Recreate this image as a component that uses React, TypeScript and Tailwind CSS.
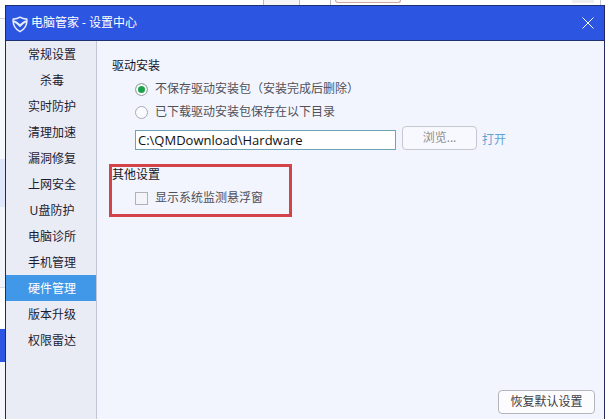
import { useState } from 'react'

const menu = [
  '常规设置',
  '杀毒',
  '实时防护',
  '清理加速',
  '漏洞修复',
  '上网安全',
  'U盘防护',
  '电脑诊所',
  '手机管理',
  '硬件管理',
  '版本升级',
  '权限雷达',
]

const saveModes = [
  { id: 'discard', label: '不保存驱动安装包（安装完成后删除）' },
  { id: 'keep', label: '已下载驱动安装包保存在以下目录' },
]

function TitleBar() {
  return (
    <header className="flex h-9 shrink-0 items-center justify-between border-y border-[#1f3270] bg-[#2c55e2] pl-1.5 pr-2 text-white">
      <div className="flex items-center gap-[3px]">
        <svg width="16" height="17" viewBox="0 0 16 17" fill="none" stroke="#e4ecff" className="mt-0.5">
          <path d="M8 1.2C6 2.5 3.6 3 1.2 3.1C.6 9 3.4 13.2 8 15.6C12.6 13.2 15.4 9 14.8 3.1C12.4 3 10 2.5 8 1.2Z" strokeWidth="1.6" strokeLinejoin="round" />
          <path d="M2 5.2C4 6 6 7.600 8 9.600C10 7.600 12 6 14 5.200" strokeWidth="2.200" />
        </svg>
        <h1>电脑管家 - 设置中心</h1>
      </div>
      <button type="button" aria-label="关闭" className="p-0.5">
        <svg width="12" height="12" viewBox="0 0 12 12" fill="none" stroke="#fff">
          <path d="M.5 .5L11.5 11.5M11.5 .5L.5 11.5" />
        </svg>
      </button>
    </header>
  )
}

function Sidebar({ active, onSelect }: { active: string; onSelect: (item: string) => void }) {
  return (
    <nav className="w-[91px] shrink-0 border-r border-[#c3c6d4] bg-[#e9ebf5]">
      {menu.map((item) => (
        <button
          key={item}
          type="button"
          onClick={() => onSelect(item)}
          className={`block h-[26px] w-full pl-0.5 pt-0.5 text-center ${item === active ? 'bg-[#4298e8] text-white' : 'text-[#1c1c30]'}`}
        >
          {item}
        </button>
      ))}
    </nav>
  )
}

// The page that shows around the edges of the dialog
function BackdropTop() {
  return (
    <div className="flex h-[5px] shrink-0 pl-[263px]">
      <div className="w-9 border-l border-[#b9b9c0] bg-[#f5f5f7]" />
      <div className="w-8 border-x border-[#b9b9c8]" />
      <div className="ml-1 h-[3px] w-[66px] rounded-b-sm border border-t-0 border-[#c9aaa4] bg-[#fdf6f3]" />
      <div className="ml-auto mr-[6px] h-[3px] w-[22px] bg-[#eeeeee]" />
      <div className="mr-[6px] border-r border-[#c8c8d0]" />
    </div>
  )
}

function BackdropLeft() {
  return (
    <div className="flex w-[5px] shrink-0 flex-col bg-white">
      <div className="h-[14px] border-b border-[#cfd2da]" />
      <div className="h-[140px] bg-[#f5f9fc]" />
      <div className="h-[48px] bg-[#dfe8fa]" />
      <div className="h-[80px] bg-[#f1f4fb]" />
      <div className="h-[42px] border-t border-[#d5dbe8]" />
      <div className="h-[33px] bg-[#2c55e2]" />
      <div className="flex-1 bg-[#f4f6fb]" />
    </div>
  )
}

export default function App() {
  const [active, setActive] = useState('硬件管理')
  const [mode, setMode] = useState('discard')
  const [path, setPath] = useState('C:\\QMDownload\\Hardware')
  const [floating, setFloating] = useState(false)

  return (
    <div className="flex h-screen flex-col overflow-hidden bg-white font-['Noto_Sans','Noto_Sans_CJK_SC',sans-serif] text-[12px] leading-4">
      <BackdropTop />
      <div className="flex min-h-0 flex-1">
        <BackdropLeft />
        <div className="mr-[2px] flex min-w-0 flex-1 flex-col border-x border-[#24285e] bg-[#f3f5fe]">
          <TitleBar />
          <div className="flex min-h-0 flex-1">
            <Sidebar active={active} onSelect={setActive} />
            <main className="flex min-w-0 flex-1 flex-col">
              <section className="px-[15px] pt-[17px]">
                <h2 className="text-[#15151f]">驱动安装</h2>
                <div className="flex flex-col gap-[7px] pl-[23px] pt-[7px]">
                  {saveModes.map((m) => (
                    <label key={m.id} className="flex items-center gap-[7px] text-[#505058]">
                      <input
                        type="radio"
                        name="save-mode"
                        checked={mode === m.id}
                        onChange={() => setMode(m.id)}
                        className="h-[13px] w-[13px] shrink-0 appearance-none rounded-full border border-[#a9abb2] bg-[#fafbfe] checked:bg-[#1fa04c] checked:shadow-[inset_0_0_0_2px_#fff]"
                      />
                      {m.label}
                    </label>
                  ))}
                </div>
                <div className="flex items-center pl-[23px] pt-1.5">
                  <input
                    type="text"
                    aria-label="保存目录"
                    value={path}
                    onChange={(e) => setPath(e.target.value)}
                    className="mt-1 h-5 w-[261px] border border-[#6fa3b8] bg-white px-0.5 font-['Open_Sans',sans-serif] text-[13px] text-[#111]"
                  />
                  <button type="button" className="ml-1.5 h-6 w-[75px] rounded-sm border border-[#c6c8d0] bg-[#f8f9fe] text-[#8c8d94]">
                    浏览...
                  </button>
                  <a href="#open" className="ml-[5px] mt-1 text-[#5fa3d6]">
                    打开
                  </a>
                </div>
              </section>
              <section className="ml-3 mt-[14px] w-[183px] border-[3px] border-[#d2444a] pb-2">
                <h2 className="text-[#15151f]">其他设置</h2>
                <label className="flex items-center gap-[7px] pl-[23px] pt-[7px] text-[#505058]">
                  <input
                    type="checkbox"
                    checked={floating}
                    onChange={(e) => setFloating(e.target.checked)}
                    className="h-[13px] w-[13px] shrink-0 appearance-none border border-[#b0b2b8] bg-[#f3f4f9] checked:bg-[#1fa04c]"
                  />
                  显示系统监测悬浮窗
                </label>
              </section>
              <footer className="mt-auto flex justify-end pb-[5px] pr-[9px]">
                <button type="button" className="h-6 w-[97px] rounded-sm border border-[#b4b5bd] bg-[#fcfcff] text-[#3c3c44]">
                  恢复默认设置
                </button>
              </footer>
            </main>
          </div>
        </div>
      </div>
    </div>
  )
}
